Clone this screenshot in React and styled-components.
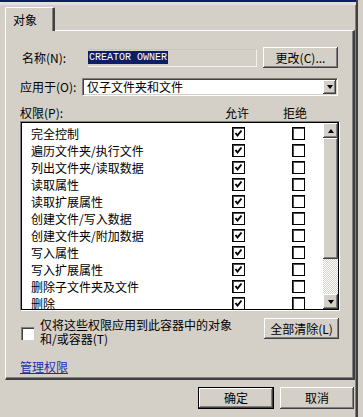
import React from "react";
import styled, { createGlobalStyle } from "styled-components";

const GlobalStyle = createGlobalStyle`
  html, body {
    margin: 0;
    padding: 0;
    background: #d4d0c8;
  }
  body {
    font-family: "Noto Sans CJK SC", "Liberation Sans", sans-serif;
    font-size: 12px;
    color: #000;
  }
`;

// classic 3D looks
const raised = `
  background: #d4d0c8;
  box-shadow: inset -1px -1px #404040, inset 1px 1px #fff, inset -2px -2px #808080, inset 2px 2px #d4d0c8;
`;

const Window = styled.div`
  width: 356px;
  height: 417px;
  border-right: 2px solid #404040;
  box-shadow: inset -1px 0 #808080;
  display: flex;
  flex-direction: column;
`;

const TitleEdge = styled.div`
  height: 2px;
  background: #0c1f66;
  border-bottom: 3px solid #e6dedd;
`;

const Body = styled.div`
  flex: 1;
  display: flex;
  flex-direction: column;
  padding: 2px 0 0 5px;
`;

const TabStrip = styled.div`
  display: flex;
  height: 24px;
  position: relative;
  z-index: 1;
  margin-bottom: -1px;
`;

const Tab = styled.div`
  width: 50px;
  background: #d4d0c8;
  border-top: 1px solid #fff;
  border-left: 1px solid #fff;
  border-right: 2px solid #404040;
  box-shadow: inset -1px 0 #808080;
  border-radius: 2px 2px 0 0;
  padding: 5px 0 0 7px;
  line-height: 14px;
  box-sizing: border-box;
`;

const Panel = styled.div`
  margin-right: 1px;
  border-top: 1px solid #fff;
  border-left: 1px solid #fff;
  border-right: 2px solid #404040;
  border-bottom: 2px solid #404040;
  box-shadow: inset -1px -1px #808080;
  padding: 16px 13px 5px 14px;
  display: flex;
  flex-direction: column;
`;

const FieldRow = styled.div`
  display: flex;
  align-items: center;
  gap: ${p => p.$gap || 0}px;
  height: ${p => p.$h}px;
  margin-top: ${p => p.$mt || 0}px;
  padding-right: 2px;
`;

const Label = styled.div`
  width: ${p => p.$indent ? 60 : 62}px;
  padding-left: ${p => p.$indent ? 2 : 0}px;
  white-space: nowrap;
  line-height: 14px;
`;

const ReadOnlyField = styled.div`
  flex: 1;
  height: 18px;
  box-sizing: border-box;
  border-top: 1px solid #c8c4bc;
  border-bottom: 1px solid #f4f2ee;
  border-right: 1px solid #f4f2ee;
  display: flex;
  align-items: center;
`;

const Selected = styled.span`
  background: #0c1f66;
  color: #fff;
  font-family: "Liberation Mono", monospace;
  font-size: 10px;
  line-height: 13px;
  padding: 0 1px;
`;

const Button = styled.button`
  ${raised}
  width: ${p => p.$w}px;
  height: ${p => p.$h || 21}px;
  border: ${p => p.$default ? "1px solid #000" : "none"};
  font: inherit;
  font-size: 12px;
  line-height: 14px;
  padding: 0;
  color: #000;
  flex-shrink: 0;
`;

const Select = styled.div`
  flex: 1;
  height: 18px;
  box-sizing: border-box;
  background: #fff;
  border-top: 1px solid #808080;
  border-left: 1px solid #808080;
  border-right: 1px solid #fff;
  border-bottom: 1px solid #fff;
  box-shadow: inset 1px 1px #404040, inset -1px -1px #d4d0c8;
  display: flex;
  align-items: center;
  padding: 0 1px 0 4px;
`;

const SelectText = styled.span`
  flex: 1;
  line-height: 14px;
`;

const DropButton = styled.div`
  ${raised}
  width: 13px;
  height: 14px;
  display: flex;
  align-items: center;
  justify-content: center;
`;

const Arrow = styled.span`
  width: 0;
  height: 0;
  border-left: 3.5px solid transparent;
  border-right: 3.5px solid transparent;
  ${p => p.$up ? "border-bottom: 4px solid #000;" : "border-top: 4px solid #000;"}
`;

const HeaderRow = styled.div`
  display: grid;
  grid-template-columns: 1fr 40px 40px;
  column-gap: 18px;
  padding-right: 25px;
  margin-top: 10px;
  height: 15px;
  line-height: 14px;
`;

const Center = styled.div`
  text-align: center;
`;

const ListBox = styled.div`
  height: 190px;
  box-sizing: border-box;
  border-top: 1px solid #808080;
  border-left: 1px solid #808080;
  border-right: 1px solid #fff;
  border-bottom: 1px solid #fff;
  display: flex;
`;

const ListInner = styled.div`
  flex: 1;
  display: flex;
  border: 1px solid #000;
  background: #fff;
`;

const Rows = styled.div`
  flex: 1;
  padding-top: 2px;
`;

const Row = styled.div`
  display: grid;
  grid-template-columns: 1fr 24px 24px;
  column-gap: 36px;
  padding: 0 13px 0 9px;
  height: 17px;
  align-items: center;
  line-height: 14px;
`;

const Box = styled.div`
  justify-self: center;
  width: 13px;
  height: 13px;
  box-sizing: border-box;
  border: 1px solid #000;
  box-shadow: inset 1px 1px #505050;
  background: #fff;
  display: flex;
  align-items: center;
  justify-content: center;
`;

const ScrollBar = styled.div`
  width: 15px;
  display: flex;
  flex-direction: column;
  background-color: #fff;
  background-image: repeating-conic-gradient(#d4d0c8 0 25%, #fff 0 50%);
  background-size: 2px 2px;
`;

const ScrollButton = styled.div`
  ${raised}
  height: 15px;
  display: flex;
  align-items: center;
  justify-content: center;
`;

const Thumb = styled.div`
  ${raised}
  height: 121px;
`;

const Track = styled.div`
  flex: 1;
`;

const CheckRow = styled.div`
  display: flex;
  justify-content: space-between;
  margin-top: 7px;
  height: 26px;
  padding-right: 1px;
`;

const CheckOption = styled.div`
  display: flex;
  gap: 6px;
  padding-left: 1px;
`;

const OptionBox = styled(Box)`
  margin-top: 9px;
  border: none;
  box-shadow: inset 1px 1px #808080, inset 2px 2px #404040, inset -1px -1px #fff;
`;

const OptionText = styled.div`
  margin-top: 0;
  line-height: 14px;
  white-space: nowrap;
`;

const Link = styled.a`
  margin-top: 16px;
  align-self: flex-start;
  color: #1830b0;
  text-decoration: underline;
  line-height: 13px;
  cursor: pointer;
`;

const Footer = styled.div`
  display: flex;
  justify-content: flex-end;
  gap: 6px;
  padding: 7px 2px 0 0;
`;

const Check = () => (
  <svg width="9" height="9" viewBox="0 0 9 9">
    <polyline points="1.5,4 3.5,6.5 7.5,1.5" fill="none" stroke="#000" strokeWidth="2" />
  </svg>
);

const permissions = [
  "完全控制",
  "遍历文件夹/执行文件",
  "列出文件夹/读取数据",
  "读取属性",
  "读取扩展属性",
  "创建文件/写入数据",
  "创建文件夹/附加数据",
  "写入属性",
  "写入扩展属性",
  "删除子文件夹及文件",
  "删除",
];

const App = () => {
  return (
    <>
      <GlobalStyle />
      <Window>
        <TitleEdge />
        <Body>
          <TabStrip>
            <Tab>对象</Tab>
          </TabStrip>
          <Panel>
            <FieldRow $h={21} $gap={6}>
              <Label $indent>名称(N):</Label>
              <ReadOnlyField>
                <Selected>CREATOR OWNER</Selected>
              </ReadOnlyField>
              <Button $w={75}>更改(C)...</Button>
            </FieldRow>
            <FieldRow $h={18} $mt={10}>
              <Label>应用于(O):</Label>
              <Select>
                <SelectText>仅子文件夹和文件</SelectText>
                <DropButton><Arrow /></DropButton>
              </Select>
            </FieldRow>
            <HeaderRow>
              <div>权限(P):</div>
              <Center>允许</Center>
              <Center>拒绝</Center>
            </HeaderRow>
            <ListBox>
              <ListInner>
                <Rows>
                  {permissions.map(name => (
                    <Row key={name}>
                      <div>{name}</div>
                      <Box><Check /></Box>
                      <Box />
                    </Row>
                  ))}
                </Rows>
                <ScrollBar>
                  <ScrollButton><Arrow $up /></ScrollButton>
                  <Thumb />
                  <Track />
                  <ScrollButton><Arrow /></ScrollButton>
                </ScrollBar>
              </ListInner>
            </ListBox>
            <CheckRow>
              <CheckOption>
                <OptionBox />
                <OptionText>
                  仅将这些权限应用到此容器中的对象<br />和/或容器(T)
                </OptionText>
              </CheckOption>
              <Button $w={75} $h={21}>全部清除(L)</Button>
            </CheckRow>
            <Link>管理权限</Link>
          </Panel>
          <Footer>
            <Button $w={76} $h={22} $default>确定</Button>
            <Button $w={74} $h={22}>取消</Button>
          </Footer>
        </Body>
      </Window>
    </>
  );
};

export default App;
